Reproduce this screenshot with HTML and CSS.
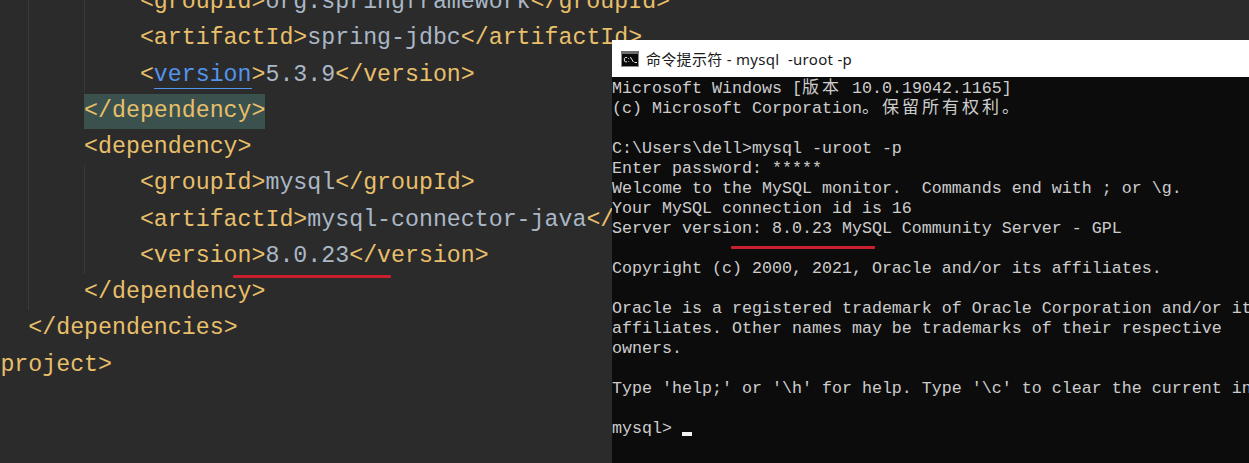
FILE: index.html
```html
<!DOCTYPE html>
<html lang="zh">
<head>
<meta charset="utf-8">
<title>MySQL version</title>
<link rel="stylesheet" href="styles.css">
</head>
<body>
<div class="page">
  <main class="editor">
    <div class="code">
      <div class="level">
        <div class="children">
          <div class="children">
            <div class="line"><span class="tag">&lt;groupId&gt;</span><span class="val">org.springframework</span><span class="tag">&lt;/groupId&gt;</span></div>
            <div class="line"><span class="tag">&lt;artifactId&gt;</span><span class="val">spring-jdbc</span><span class="tag">&lt;/artifactId&gt;</span></div>
            <div class="line"><span class="tag">&lt;</span><span class="link">version</span><span class="tag">&gt;</span><span class="val">5.3.9</span><span class="tag">&lt;/version&gt;</span></div>
          </div>
          <div class="line"><span class="tag hl">&lt;/dependency&gt;</span></div>
          <div class="line"><span class="tag">&lt;dependency&gt;</span></div>
          <div class="children">
            <div class="line"><span class="tag">&lt;groupId&gt;</span><span class="val">mysql</span><span class="tag">&lt;/groupId&gt;</span></div>
            <div class="line"><span class="tag">&lt;artifactId&gt;</span><span class="val">mysql-connector-java</span><span class="tag">&lt;/artifactId&gt;</span></div>
            <div class="line"><span class="tag">&lt;version&gt;</span><span class="val">8.0.23</span><span class="tag">&lt;/version&gt;</span></div>
          </div>
          <div class="line"><span class="tag">&lt;/dependency&gt;</span></div>
        </div>
        <div class="line"><span class="tag">&lt;/dependencies&gt;</span></div>
      </div>
      <div class="line"><span class="tag">&lt;/project&gt;</span></div>
    </div>
  </main>
  <section class="terminal">
    <header class="titlebar">
      <svg class="cmd-icon" viewBox="0 0 18 16" width="18" height="16" aria-hidden="true">
        <rect x="0" y="0" width="18" height="16" fill="#8f8f8f"/>
        <rect x="0" y="0" width="18" height="3" fill="#6f6f6f"/>
        <rect x="1" y="3" width="16" height="12" fill="#0a0a0a"/>
        <path d="M6 6.5H4.2L3.4 7.3V10L4.2 10.8H6M7.6 7.2V7.9M7.6 10V10.7M9.4 6L12.4 11M13.4 11.5H16" fill="none" stroke="#e8e8e8" stroke-width="1"/>
      </svg>
      <span class="title">命令提示符 - mysql&nbsp; -uroot -p</span>
    </header>
    <div class="console">
      <div class="tline">Microsoft Windows [<span class="cjk">版本</span> 10.0.19042.1165]</div>
      <div class="tline">(c) Microsoft Corporation<span class="cjk">。保留所有权利。</span></div>
      <div class="tline"></div>
      <div class="tline">C:\Users\dell&gt;mysql -uroot -p</div>
      <div class="tline">Enter password: *****</div>
      <div class="tline">Welcome to the MySQL monitor.  Commands end with ; or \g.</div>
      <div class="tline">Your MySQL connection id is 16</div>
      <div class="tline">Server version: 8.0.23 MySQL Community Server - GPL</div>
      <div class="tline"></div>
      <div class="tline">Copyright (c) 2000, 2021, Oracle and/or its affiliates.</div>
      <div class="tline"></div>
      <div class="tline">Oracle is a registered trademark of Oracle Corporation and/or its</div>
      <div class="tline">affiliates. Other names may be trademarks of their respective</div>
      <div class="tline">owners.</div>
      <div class="tline"></div>
      <div class="tline">Type 'help;' or '\h' for help. Type '\c' to clear the current input statement.</div>
      <div class="tline"></div>
      <div class="tline">mysql&gt; <span class="cursor"></span></div>
    </div>
  </section>
  <div class="mark mark-editor"></div>
  <div class="mark mark-console"></div>
</div>
</body>
</html>
```

FILE: styles.css
```css
* { box-sizing: border-box; }
html, body { margin: 0; padding: 0; }
body { background: #2b2b2b; overflow: hidden; }

.page {
  position: relative;
  display: flex;
  width: 1249px;
  height: 463px;
  overflow: hidden;
  background: #2b2b2b;
}

/* Editor: runs on underneath the terminal window */
.editor {
  flex: 0 0 612px;
  width: 612px;
  height: 463px;
  font-family: "Liberation Mono", monospace;
  font-size: 23.25px;
  line-height: 36.25px;
}
.code { margin: -16px 0 0 -27.5px; width: 900px; }
.level { padding-left: 4ch; }
.children {
  padding-left: calc(4ch - 1px);
  border-left: 1px solid #3a3a3a;
}
.line { height: 36.25px; white-space: pre; }
.tag { color: #e8bf6a; }
.val { color: #a9b7c6; }
.link { color: #5394ec; border-bottom: 1px solid #5394ec; }
.hl { display: inline-block; background: #3b514d; height: 35px; line-height: 35px; }

/* Terminal */
.terminal {
  flex: 1 1 auto;
  min-width: 0;
  margin-top: 40px;
  display: flex;
  flex-direction: column;
  background: #0c0c0c;
  overflow: hidden;
}
.titlebar {
  flex: 0 0 37px;
  display: flex;
  align-items: center;
  gap: 7px;
  padding-left: 9px;
  background: #fff;
}
.cmd-icon { flex: none; }
.title {
  font-family: "Noto Sans", "Noto Sans CJK SC", sans-serif;
  font-size: 15px;
  letter-spacing: 0.3px;
  color: #1a1a1a;
  white-space: pre;
}
.console {
  padding-top: 2px;
  font-family: "Liberation Mono", "Noto Sans CJK SC", monospace;
  font-size: 16.67px;
  color: #cccccc;
}
.tline { height: 20px; line-height: 20px; white-space: pre; }
.cjk {
  font-family: "Noto Sans CJK SC", sans-serif;
  font-size: 17px;
  letter-spacing: 3px;
  line-height: 0;
}
.cursor {
  display: inline-block;
  width: 10px;
  height: 4px;
  background: #f2f2f2;
  vertical-align: -3px;
}

/* Red hand-drawn annotations */
.mark {
  position: absolute;
  height: 3px;
  background: #c8202f;
  border-radius: 1px;
}
.mark-editor { left: 233px; top: 275px; width: 158px; }
.mark-console { left: 731px; top: 246px; width: 144px; }
```
